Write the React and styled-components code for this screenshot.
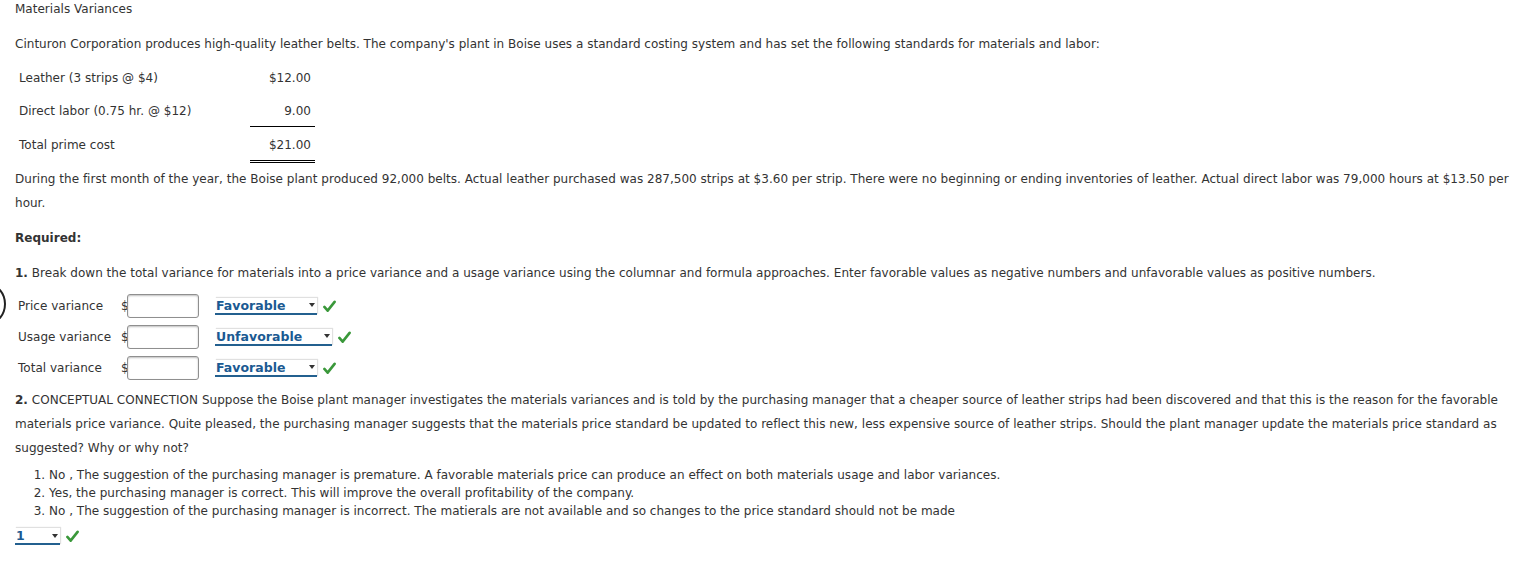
import React from 'react'
import styled, { createGlobalStyle } from 'styled-components'

const Global = createGlobalStyle`
  body {
    margin: 0;
    background: #fff;
    font-family: Verdana, "DejaVu Sans", sans-serif;
    font-size: 12px;
    letter-spacing: 0.02px;
    color: #333;
  }
`

const standards = [
  { label: 'Leather (3 strips @ $4)', value: '$12.00' },
  { label: 'Direct labor (0.75 hr. @ $12)', value: '9.00', rule: 'single' },
  { label: 'Total prime cost', value: '$21.00', rule: 'double' },
]

const variances = [
  { label: 'Price variance', choice: 'Favorable', width: 102 },
  { label: 'Usage variance', choice: 'Unfavorable', width: 117 },
  { label: 'Total variance', choice: 'Favorable', width: 102 },
]

const options = [
  'No , The suggestion of the purchasing manager is premature. A favorable materials price can produce an effect on both materials usage and labor variances.',
  'Yes, the purchasing manager is correct. This will improve the overall profitability of the company.',
  'No , The suggestion of the purchasing manager is incorrect. The matierals are not available and so changes to the price standard should not be made',
]

const Check = () => (
  <CheckMark viewBox="0 0 14 14">
    <path d="M1.5 7.5 L5 11.5 L12.5 2" fill="none" stroke="#3a983a" strokeWidth="2.8" strokeLinecap="round" strokeLinejoin="round" />
  </CheckMark>
)

const Dropdown = ({ value, width }) => (
  <Select style={{ width }}>
    <span>{value}</span>
    <Arrow />
  </Select>
)

const App = () => {
  return (
    <Page>
      <Global />
      <Cursor />
      <Title>Materials Variances</Title>
      <Para>
        Cinturon Corporation produces high-quality leather belts. The company's plant in Boise uses a standard costing system and has set the following standards for materials and labor:
      </Para>
      <Standards>
        {standards.map((s) => (
          <StdRow key={s.label}>
            <StdLabel>{s.label}</StdLabel>
            <StdValue rule={s.rule}>{s.value}</StdValue>
          </StdRow>
        ))}
      </Standards>
      <Body>
        During the first month of the year, the Boise plant produced 92,000 belts. Actual leather purchased was 287,500 strips at $3.60 per strip. There were no beginning or ending inventories of leather. Actual direct labor was 79,000 hours at $13.50 per hour.
      </Body>
      <Required>Required:</Required>
      <Question>
        <b>1.</b> Break down the total variance for materials into a price variance and a usage variance using the columnar and formula approaches. Enter favorable values as negative numbers and unfavorable values as positive numbers.
      </Question>
      <Variances>
        {variances.map((v) => (
          <VarRow key={v.label}>
            <VarLabel>{v.label}</VarLabel>
            <Dollar>$</Dollar>
            <Input />
            <Dropdown value={v.choice} width={v.width} />
            <Check />
          </VarRow>
        ))}
      </Variances>
      <Body2>
        <b>2.</b> CONCEPTUAL CONNECTION Suppose the Boise plant manager investigates the materials variances and is told by the purchasing manager that a cheaper source of leather strips had been discovered and that this is the reason for the favorable materials price variance. Quite pleased, the purchasing manager suggests that the materials price standard be updated to reflect this new, less expensive source of leather strips. Should the plant manager update the materials price standard as suggested? Why or why not?
      </Body2>
      <Options>
        {options.map((o) => (
          <li key={o}>{o}</li>
        ))}
      </Options>
      <AnswerRow>
        <Dropdown value="1" width={45} />
        <Check />
      </AnswerRow>
    </Page>
  )
}

const Page = styled.div`
  position: relative;
  padding: 1px 8px 0 15px;
  min-height: 567px;
  box-sizing: border-box;
`
const Cursor = styled.div`
  position: absolute;
  left: -28px;
  top: 284px;
  width: 30px;
  height: 36px;
  border: 2px solid #222;
  border-radius: 50%;
`
const Title = styled.div`
  height: 17px;
  line-height: 17px;
`
const Para = styled.p`
  margin: 18px 0 0;
  line-height: 17px;
`
const Standards = styled.div`
  margin-top: 15px;
  width: 292px;
  padding-left: 4px;
`
const StdRow = styled.div`
  display: flex;
  justify-content: space-between;
  align-items: flex-start;
  height: 33px;
  &:nth-child(2) { height: 34px; }
  &:last-child { height: 26px; }
`
const StdLabel = styled.span`
  line-height: 20px;
`
const StdValue = styled.span`
  width: 65px;
  text-align: right;
  line-height: 20px;
  padding-right: 4px;
  box-sizing: border-box;
  margin-right: -4px;
  padding-bottom: 5px;
  border-bottom: ${({ rule }) => rule === 'single' ? '1px solid #000' : rule === 'double' ? '3px double #000' : 'none'};
`
const Body = styled.p`
  margin: 6px 0 0;
  line-height: 24px;
`
const Required = styled.div`
  margin-top: 13px;
  font-weight: bold;
  line-height: 20px;
`
const Question = styled.p`
  margin: 15px 0 0;
  line-height: 20px;
`
const Variances = styled.div`
  margin-top: 11px;
  display: flex;
  flex-direction: column;
  gap: 7px;
`
const VarRow = styled.div`
  display: flex;
  align-items: center;
  height: 24px;
`
const VarLabel = styled.span`
  width: 106px;
  padding-left: 3px;
  box-sizing: border-box;
`
const Dollar = styled.span`
  width: 7px;
`
const Input = styled.span`
  width: 70px;
  height: 22px;
  border: 1px solid #8f8f8f;
  border-radius: 3px;
  box-shadow: inset 0 1px 2px rgba(0,0,0,0.25);
  background: #fff;
  margin-left: -1px;
  margin-right: 16px;
`
const Select = styled.span`
  display: inline-flex;
  align-items: center;
  justify-content: space-between;
  height: 17px;
  box-sizing: border-box;
  border-bottom: 2px solid #23608f;
  box-shadow: 1px -1px 1px rgba(0,0,0,0.12);
  color: #1b5a92;
  font-weight: bold;
  font-size: 12.5px;
  line-height: 15px;
  padding: 0 2px 0 1px;
`
const Arrow = styled.i`
  width: 0;
  height: 0;
  border-left: 3.5px solid transparent;
  border-right: 3.5px solid transparent;
  border-top: 4px solid #333;
`
const CheckMark = styled.svg`
  width: 13px;
  height: 13px;
  margin-left: 6px;
`
const Body2 = styled.p`
  margin: 8px 0 0;
  line-height: 24px;
`
const Options = styled.ol`
  margin: 6px 0 0;
  padding-left: 34px;
  line-height: 18px;
`
const AnswerRow = styled.div`
  margin-top: 8px;
  display: flex;
  align-items: center;
`

export default App
